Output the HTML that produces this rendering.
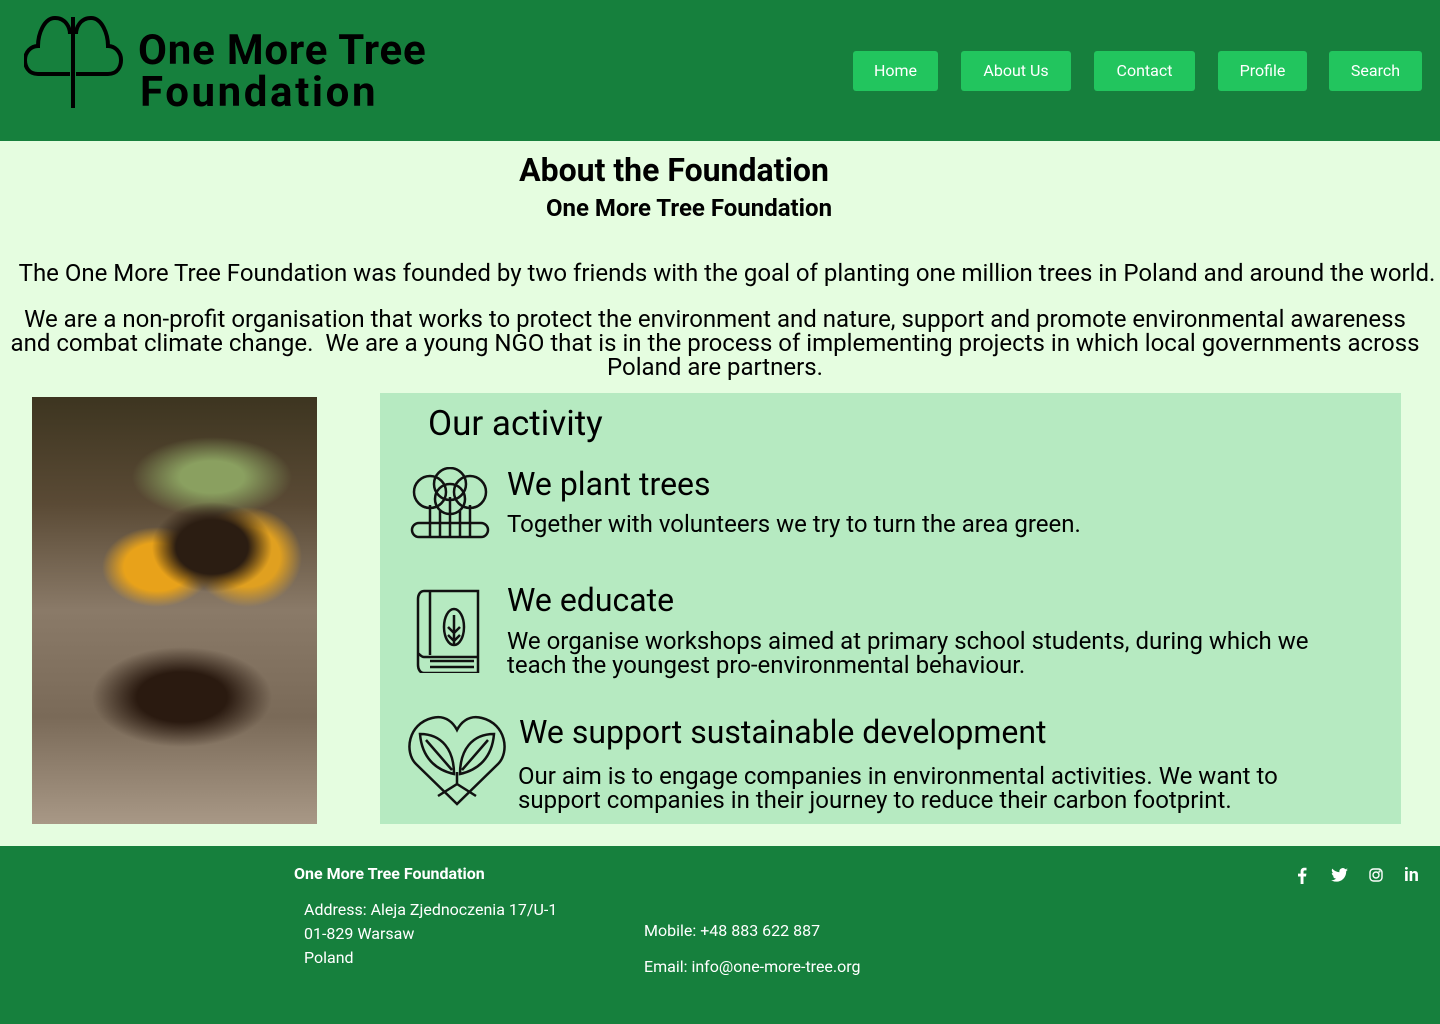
<!DOCTYPE html>
<html><head><meta charset="utf-8"><style>
*{margin:0;padding:0;box-sizing:border-box}
body{width:1440px;height:1024px;background:#e5fde0;font-family:"Roboto","Liberation Sans",sans-serif;color:#000;position:relative;overflow:hidden}
.abs{position:absolute}
header{position:absolute;left:0;top:0;width:1440px;height:141px;background:#16803d}
.btn{position:absolute;top:51px;height:40px;background:#22c55e;color:#fff;font-size:16px;line-height:40px;text-align:center;border-radius:3px}
.logo{position:absolute;left:138px;font-weight:bold;font-size:42px;line-height:42px}
.c{text-align:center;white-space:nowrap}
footer{position:absolute;left:0;top:846px;width:1440px;height:178px;background:#16803d;color:#fff;font-size:16px}
.act h3{font-weight:normal;font-size:32px}
.act p{font-size:24px;line-height:24px}
</style></head><body>
<header>
<svg class="abs" style="left:24px;top:14px" width="100" height="96" viewBox="0 0 100 96" fill="none" stroke="#000" stroke-width="4">
<path d="M49 94V3M46 60H14C4 60 1 52 1 46C1 38 7 32 14 32C14 20 20 4 31 4C42 4 46 14 46 20M52 20C52 14 56 4 67 4C78 4 84 20 84 32C91 32 97 38 97 46C97 52 94 60 84 60H52"/>
</svg>
<div class="logo" style="top:30px;letter-spacing:0.8px">One More Tree</div>
<div class="logo" style="top:72px;left:140px;letter-spacing:2.6px">Foundation</div>
<div class="btn" style="left:853px;width:85px">Home</div>
<div class="btn" style="left:961px;width:110px">About Us</div>
<div class="btn" style="left:1094px;width:101px">Contact</div>
<div class="btn" style="left:1218px;width:89px">Profile</div>
<div class="btn" style="left:1329px;width:93px">Search</div>
</header>
<div class="abs c" style="left:474px;width:400px;top:151px;font-size:32px;font-weight:bold">About the Foundation</div>
<div class="abs c" style="left:489px;width:400px;top:194px;font-size:24px;font-weight:bold">One More Tree Foundation</div>
<div class="abs c" style="left:0;width:1454px;top:259px;font-size:24px">The One More Tree Foundation was founded by two friends with the goal of planting one million trees in Poland and around the world.</div>
<div class="abs" style="left:5px;width:1420px;top:307px;font-size:24px;line-height:24px;text-align:center">We are a non-profit organisation that works to protect the environment and nature, support and promote environmental awareness and combat climate change.&nbsp; We are a young NGO that is in the process of implementing projects in which local governments across Poland are partners.</div>
<div class="abs" style="left:32px;top:397px;width:285px;height:427px;overflow:hidden;background:
radial-gradient(ellipse 60px 45px at 180px 150px,#2b1d12 60%,transparent 100%),
radial-gradient(ellipse 55px 40px at 125px 170px,#e8a21a 60%,transparent 100%),
radial-gradient(ellipse 55px 50px at 215px 160px,#e0a020 60%,transparent 100%),
radial-gradient(ellipse 90px 50px at 150px 300px,#2a1a10 50%,transparent 100%),
radial-gradient(ellipse 80px 40px at 180px 80px,#8aa060 40%,transparent 100%),
linear-gradient(180deg,#3d3520 0%,#5a4a35 25%,#8a7a68 50%,#7a6a58 75%,#a89886 100%)"></div>
<div class="abs act" style="left:380px;top:393px;width:1021px;height:431px;background:#b6eac1">
<div class="abs" style="left:48px;top:10px;font-size:35px">Our activity</div>
<svg class="abs" style="left:30px;top:74px" width="80" height="72" viewBox="0 0 80 72" fill="none" stroke="#111" stroke-width="2.5">
<circle cx="20" cy="25" r="16"/><circle cx="40" cy="17" r="16"/><circle cx="60" cy="25" r="16"/><circle cx="40" cy="32" r="15"/>
<rect x="2" y="56" width="76" height="14" rx="7"/><path d="M20 38V70M40 30V70M60 38V70M30 44V70M50 44V70"/></svg>
<h3 class="abs" style="left:127px;top:72px">We plant trees</h3>
<p class="abs" style="left:127px;top:119px">Together with volunteers we try to turn the area green.</p>
<svg class="abs" style="left:36px;top:196px" width="64" height="84" viewBox="0 0 64 84" fill="none" stroke="#111" stroke-width="2.5">
<path d="M8 2H62V84H8C4 84 2 80 2 76V10C2 6 4 2 8 2ZM2 66C2 62 4 68 8 68H62M14 2V66M14 72H58M14 78H58"/>
<ellipse cx="38" cy="38" rx="10" ry="18"/><path d="M38 26V56M32 38L38 44L44 38M32 46L38 52L44 46"/></svg>
<h3 class="abs" style="left:127px;top:188px">We educate</h3>
<p class="abs" style="left:127px;top:236px;width:820px">We organise workshops aimed at primary school students, during which we teach the youngest pro-environmental behaviour.</p>
<svg class="abs" style="left:26px;top:321px" width="102" height="92" viewBox="0 0 102 92" fill="none" stroke="#111" stroke-width="2.5">
<path d="M51 90L10 50C-2 38 2 10 26 4C40 0 48 10 51 16C54 10 62 0 76 4C100 10 104 38 92 50Z"/>
<path d="M48 60C30 56 16 44 14 20C36 20 48 36 48 60ZM54 60C72 56 86 44 88 20C66 20 54 36 54 60ZM51 58V70L32 82M51 70L70 82M20 26L46 56M82 26L56 56"/></svg>
<h3 class="abs" style="left:139px;top:320px">We support sustainable development</h3>
<p class="abs" style="left:138px;top:371px;width:800px">Our aim is to engage companies in environmental activities. We want to support companies in their journey to reduce their carbon footprint.</p>
</div>
<footer>
<div class="abs" style="left:294px;top:18px;font-weight:bold">One More Tree Foundation</div>
<div class="abs" style="left:304px;top:52px;line-height:24px">Address: Aleja Zjednoczenia 17/U-1<br>01-829 Warsaw<br>Poland</div>
<div class="abs" style="left:644px;top:75px">Mobile: +48 883 622 887</div>
<div class="abs" style="left:644px;top:111px">Email: info@one-more-tree.org</div>
<svg class="abs" style="left:1297px;top:21px" width="10" height="17" viewBox="0 0 10 17" fill="#fff"><path d="M6.5 17V9.5H9L9.4 6.6H6.5V4.8C6.5 4 6.8 3.4 7.9 3.4H9.5V0.8C9.2 0.8 8.300 0.7 7.300 0.7 5.100 0.7 3.600 2 3.600 4.500V6.600H1V9.500H3.600V17Z"/></svg>
<svg class="abs" style="left:1331px;top:22px" width="17" height="14" viewBox="0 0 24 20" fill="#fff"><path d="M24 2.4c-.9.4-1.8.7-2.8.8 1-.6 1.8-1.6 2.2-2.7-1 .6-2 1-3.1 1.2A4.9 4.9 0 0 0 11.9 6 14 14 0 0 1 1.7.9a4.9 4.9 0 0 0 1.5 6.6c-.8 0-1.6-.3-2.2-.6 0 2.4 1.7 4.4 3.9 4.8-.7.2-1.5.2-2.2.1.6 2 2.4 3.4 4.6 3.4A9.9 9.9 0 0 1 0 17.3 14 14 0 0 0 7.5 19.5c9.1 0 14-7.5 14-14v-.6c1-.7 1.8-1.6 2.5-2.5z"/></svg>
<svg class="abs" style="left:1369px;top:22px" width="14" height="14" viewBox="0 0 14 14" fill="none" stroke="#fff" stroke-width="1.4"><rect x="1" y="1" width="12" height="12" rx="3.5"/><circle cx="7" cy="7" r="3"/><circle cx="10.5" cy="3.5" r="0.4" fill="#fff"/></svg>
<div class="abs" style="left:1404px;top:19px;font-weight:bold;font-size:18px">in</div>
</footer>
</body></html>
